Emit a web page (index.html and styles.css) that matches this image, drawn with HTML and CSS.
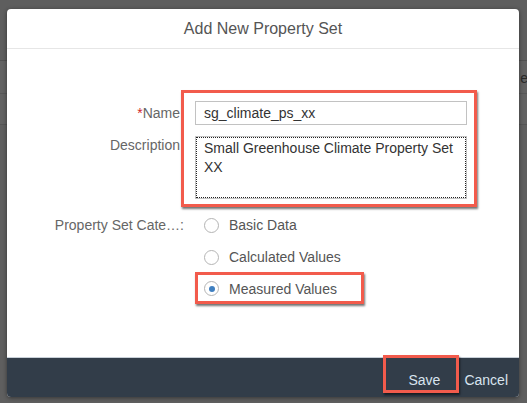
FILE: index.html
```html
<!DOCTYPE html>
<html>
<head>
<meta charset="utf-8">
<link rel="stylesheet" href="styles.css">
</head>
<body>
<div class="backdrop">
  <div class="bd-top"></div>
  <div class="bd-row"><span class="bd-text">e</span></div>
  <div class="bd-row2"></div>
  <div class="bd-rest"></div>
</div>
<div class="dialog">
  <div class="dlg-header">Add New Property Set</div>
  <div class="dlg-content">
    <div class="form">
      <div class="lbl lbl-name"><span class="req">*</span>Name</div>
      <div class="fields-group">
        <div class="input">sg_climate_ps_xx</div>
        <div class="textarea">Small Greenhouse Climate Property Set XX</div>
      </div>
      <div class="lbl lbl-desc">Description</div>
      <div class="lbl lbl-cat">Property Set Cate…:</div>
      <div class="radios">
        <div class="radio-row"><span class="radio"></span><span class="radio-text">Basic Data</span></div>
        <div class="radio-row"><span class="radio"></span><span class="radio-text">Calculated Values</span></div>
        <div class="radio-row"><span class="radio-item highlight-radio"><span class="radio checked"></span><span class="radio-text">Measured Values</span></span></div>
      </div>
    </div>
  </div>
  <div class="dlg-footer">
    <button class="btn btn-save">Save</button>
    <button class="btn">Cancel</button>
  </div>
</div>
</body>
</html>
```
FILE: styles.css
```css
html, body {
  margin: 0;
  padding: 0;
}
body {
  width: 527px;
  height: 403px;
  overflow: hidden;
  background: #5f5f5f;
  font-family: "Liberation Sans", Arial, sans-serif;
  position: relative;
}
.backdrop {
  display: flex;
  flex-direction: column;
  height: 403px;
}
.bd-top {
  height: 60px;
  background: #5e5e5e;
  border-bottom: 1px solid #515151;
}
.bd-row {
  height: 32px;
  background: #626262;
  border-bottom: 1px solid #575757;
  display: flex;
  justify-content: flex-end;
  align-items: center;
}
.bd-text {
  font-size: 14px;
  color: #2a2a2a;
  margin-right: -1px;
  margin-top: 2px;
}
.bd-row2 {
  height: 30px;
  background: #626262;
  border-bottom: 1px solid #555;
}
.bd-rest {
  flex: 1;
  background: #5f5f5f;
}
.dialog {
  position: absolute;
  left: 7px;
  top: 9px;
  width: 512px;
  height: 388px;
  background: #fff;
  border-radius: 4px;
  box-shadow: 0 1px 4px rgba(0,0,0,0.45);
  display: flex;
  flex-direction: column;
  overflow: hidden;
}
.dlg-header {
  height: 39px;
  border-bottom: 1px solid #e6e6e6;
  display: flex;
  align-items: center;
  justify-content: center;
  font-size: 16px;
  color: #555;
}
.dlg-content {
  flex: 1;
  padding-top: 52px;
}
.form {
  display: grid;
  grid-template-columns: 173px 272px;
  column-gap: 15px;
  grid-template-rows: 24px 63px auto;
  row-gap: 11px;
}
.lbl {
  font-size: 14px;
  color: #666;
  text-align: right;
  grid-column: 1;
}
.lbl-name {
  grid-row: 1;
  line-height: 24px;
}
.req {
  color: #d0262c;
}
.lbl-desc {
  grid-row: 2;
  line-height: 19px;
}
.lbl-cat {
  grid-row: 3;
  line-height: 32px;
  margin-top: -1px;
  margin-right: -4px;
}
.fields-group {
  grid-column: 2;
  grid-row: 1 / 3;
  display: flex;
  flex-direction: column;
  gap: 11px;
  position: relative;
}
.fields-group::after {
  content: "";
  position: absolute;
  left: -14px;
  right: -10px;
  top: -11px;
  bottom: -8px;
  border: 3px solid #f25b4c;
  box-shadow: 1px 2px 2px rgba(0,0,0,0.55);
}
.input {
  height: 22px;
  border: 1px solid #c2c2c2;
  font-size: 14px;
  line-height: 22px;
  color: #333;
  padding-left: 8px;
}
.textarea {
  height: 57px;
  border: 1px solid #c2c2c2;
  outline: 1px dotted #222;
  outline-offset: -2px;
  font-size: 14px;
  line-height: 19px;
  color: #333;
  padding: 2px 8px 2px 8px;
}
.radios {
  grid-column: 2;
  grid-row: 3;
  display: flex;
  flex-direction: column;
  margin-top: -1px;
}
.radio-row {
  height: 32px;
  display: flex;
  align-items: center;
  margin-left: 9px;
}
.radio-row:last-child {
  height: 31px;
}
.radio-item {
  display: flex;
  align-items: center;
  position: relative;
}
.highlight-radio::after {
  content: "";
  position: absolute;
  left: -9px;
  right: -27px;
  top: -9px;
  bottom: -7px;
  border: 3px solid #f25b4c;
  box-shadow: 1px 2px 2px rgba(0,0,0,0.55);
}
.radio {
  width: 13px;
  height: 13px;
  border: 1px solid #b4b4b4;
  border-radius: 50%;
  box-sizing: content-box;
  position: relative;
  flex: none;
}
.radio.checked::after {
  content: "";
  position: absolute;
  left: 3.5px;
  top: 3.5px;
  width: 6px;
  height: 6px;
  border-radius: 50%;
  background: #3f7fc0;
}
.radio-text {
  font-size: 14px;
  color: #555;
  margin-left: 10px;
}
.dlg-footer {
  height: 39px;
  background: #323d49;
  border-top: 1px solid #c8d0d8;
  display: flex;
  justify-content: flex-end;
  align-items: stretch;
  gap: 2px;
}
.btn {
  background: none;
  border: none;
  font-family: "Liberation Sans", Arial, sans-serif;
  font-size: 14px;
  color: #d9e4ef;
  padding: 0 11px;
  margin: 0;
  position: relative;
  padding-top: 4px;
}
.btn-save::after {
  content: "";
  position: absolute;
  left: -14px;
  right: -8px;
  top: -3px;
  bottom: 4px;
  border: 3px solid #f25b4c;
  box-shadow: 1px 2px 2px rgba(0,0,0,0.55);
}
```
